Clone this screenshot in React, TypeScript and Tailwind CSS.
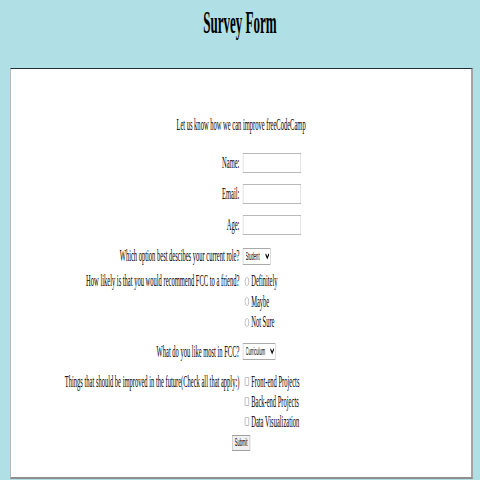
import React from 'react';

// page is laid out at 1180px wide, then squeezed horizontally into 480px
const label = "text-right text-[16px] leading-[18px] text-black";

function Row({ text, children, className = '' }: { text: string; children: React.ReactNode; className?: string }) {
  return (
    <div className={`grid grid-cols-2 gap-x-[8px] items-center ${className}`}>
      <label className={label}>{text}</label>
      <div className="flex items-center">{children}</div>
    </div>
  );
}

function Radio({ text }: { text: string }) {
  return (
    <div className="flex items-center h-[20.5px]">
      <input type="radio" name="recommend" className="appearance-none w-[10px] h-[9px] rounded-full border border-[#a8a8a8] bg-white ml-[5px] mr-[6px]" />
      <span className="text-[16px] leading-[18px]">{text}</span>
    </div>
  );
}

function Check({ text }: { text: string }) {
  return (
    <div className="flex items-center h-[20px]">
      <input type="checkbox" className="appearance-none w-[10px] h-[9px] rounded-[1px] border border-[#a8a8a8] bg-white ml-[5px] mr-[6px]" />
      <span className="text-[16px] leading-[18px]">{text}</span>
    </div>
  );
}

export default function App() {
  return (
    <div className="w-[480px] h-[480px] overflow-hidden bg-[#b0e0e6]">
      <div className="w-[1180px] origin-top-left scale-x-[0.40678] font-['Liberation_Serif',serif] text-black">
        <header className="h-[68px] pt-[4px]">
          <h1 className="text-center text-[32px] leading-[37px] font-bold">Survey Form</h1>
        </header>

        <form className="ml-[25px] w-[1138px] h-[411px] bg-white border-t border-t-[#22323a] border-l-2 border-l-[#a9a9a9] border-r-[5px] border-r-[#a3a3a3] border-b-2 border-b-[#8f8f8f] pt-[47px]">
          <p className="text-center text-[16px] leading-[18px]">Let us know how we can improve freeCodeCamp</p>

          <Row text="Name:" className="mt-[19px] h-[20px]">
            <input type="text" className="w-[143px] h-[20px] border border-[#b9b9b9] bg-white" />
          </Row>
          <Row text="Email:" className="mt-[11px] h-[20px]">
            <input type="email" className="w-[143px] h-[20px] border border-[#b9b9b9] bg-white" />
          </Row>
          <Row text="Age:" className="mt-[11px] h-[20px]">
            <input type="number" className="w-[143px] h-[20px] border border-[#b9b9b9] bg-white" />
          </Row>

          <Row text="Which option best descibes your current role?" className="mt-[11px] h-[20px]">
            <select className="w-[69px] h-[17px] border border-[#a9a9a9] bg-white text-[10px] font-['Liberation_Sans',sans-serif] px-[2px]">
              <option>Student</option>
            </select>
          </Row>

          <div className="grid grid-cols-2 gap-x-[8px] mt-[5px]">
            <label className={`${label} leading-[20.5px]`}>How likely is that you would recommend FCC to a friend?</label>
            <div>
              <Radio text="Definitely" />
              <Radio text="Maybe" />
              <Radio text="Not Sure" />
            </div>
          </div>

          <Row text="What do you like most in FCC?" className="mt-[9px] h-[20px]">
            <select className="w-[81px] h-[17px] border border-[#a9a9a9] bg-white text-[10px] font-['Liberation_Sans',sans-serif] px-[2px]">
              <option>Curriculum</option>
            </select>
          </Row>

          <div className="grid grid-cols-2 gap-x-[8px] mt-[10px]">
            <label className={`${label} leading-[20px]`}>Things that should be improved in the future(Check all that apply:)</label>
            <div>
              <Check text="Front-end Projects" />
              <Check text="Back-end Projects" />
              <Check text="Data Visualization" />
            </div>
          </div>

          <div className="flex justify-center mt-[3px]">
            <button type="button" className="w-[44px] h-[16px] border border-[#a0a0a0] bg-[#f0f0f0] text-[10px] leading-[14px] font-['Liberation_Sans',sans-serif]">Submit</button>
          </div>
        </form>
      </div>
    </div>
  );
}
